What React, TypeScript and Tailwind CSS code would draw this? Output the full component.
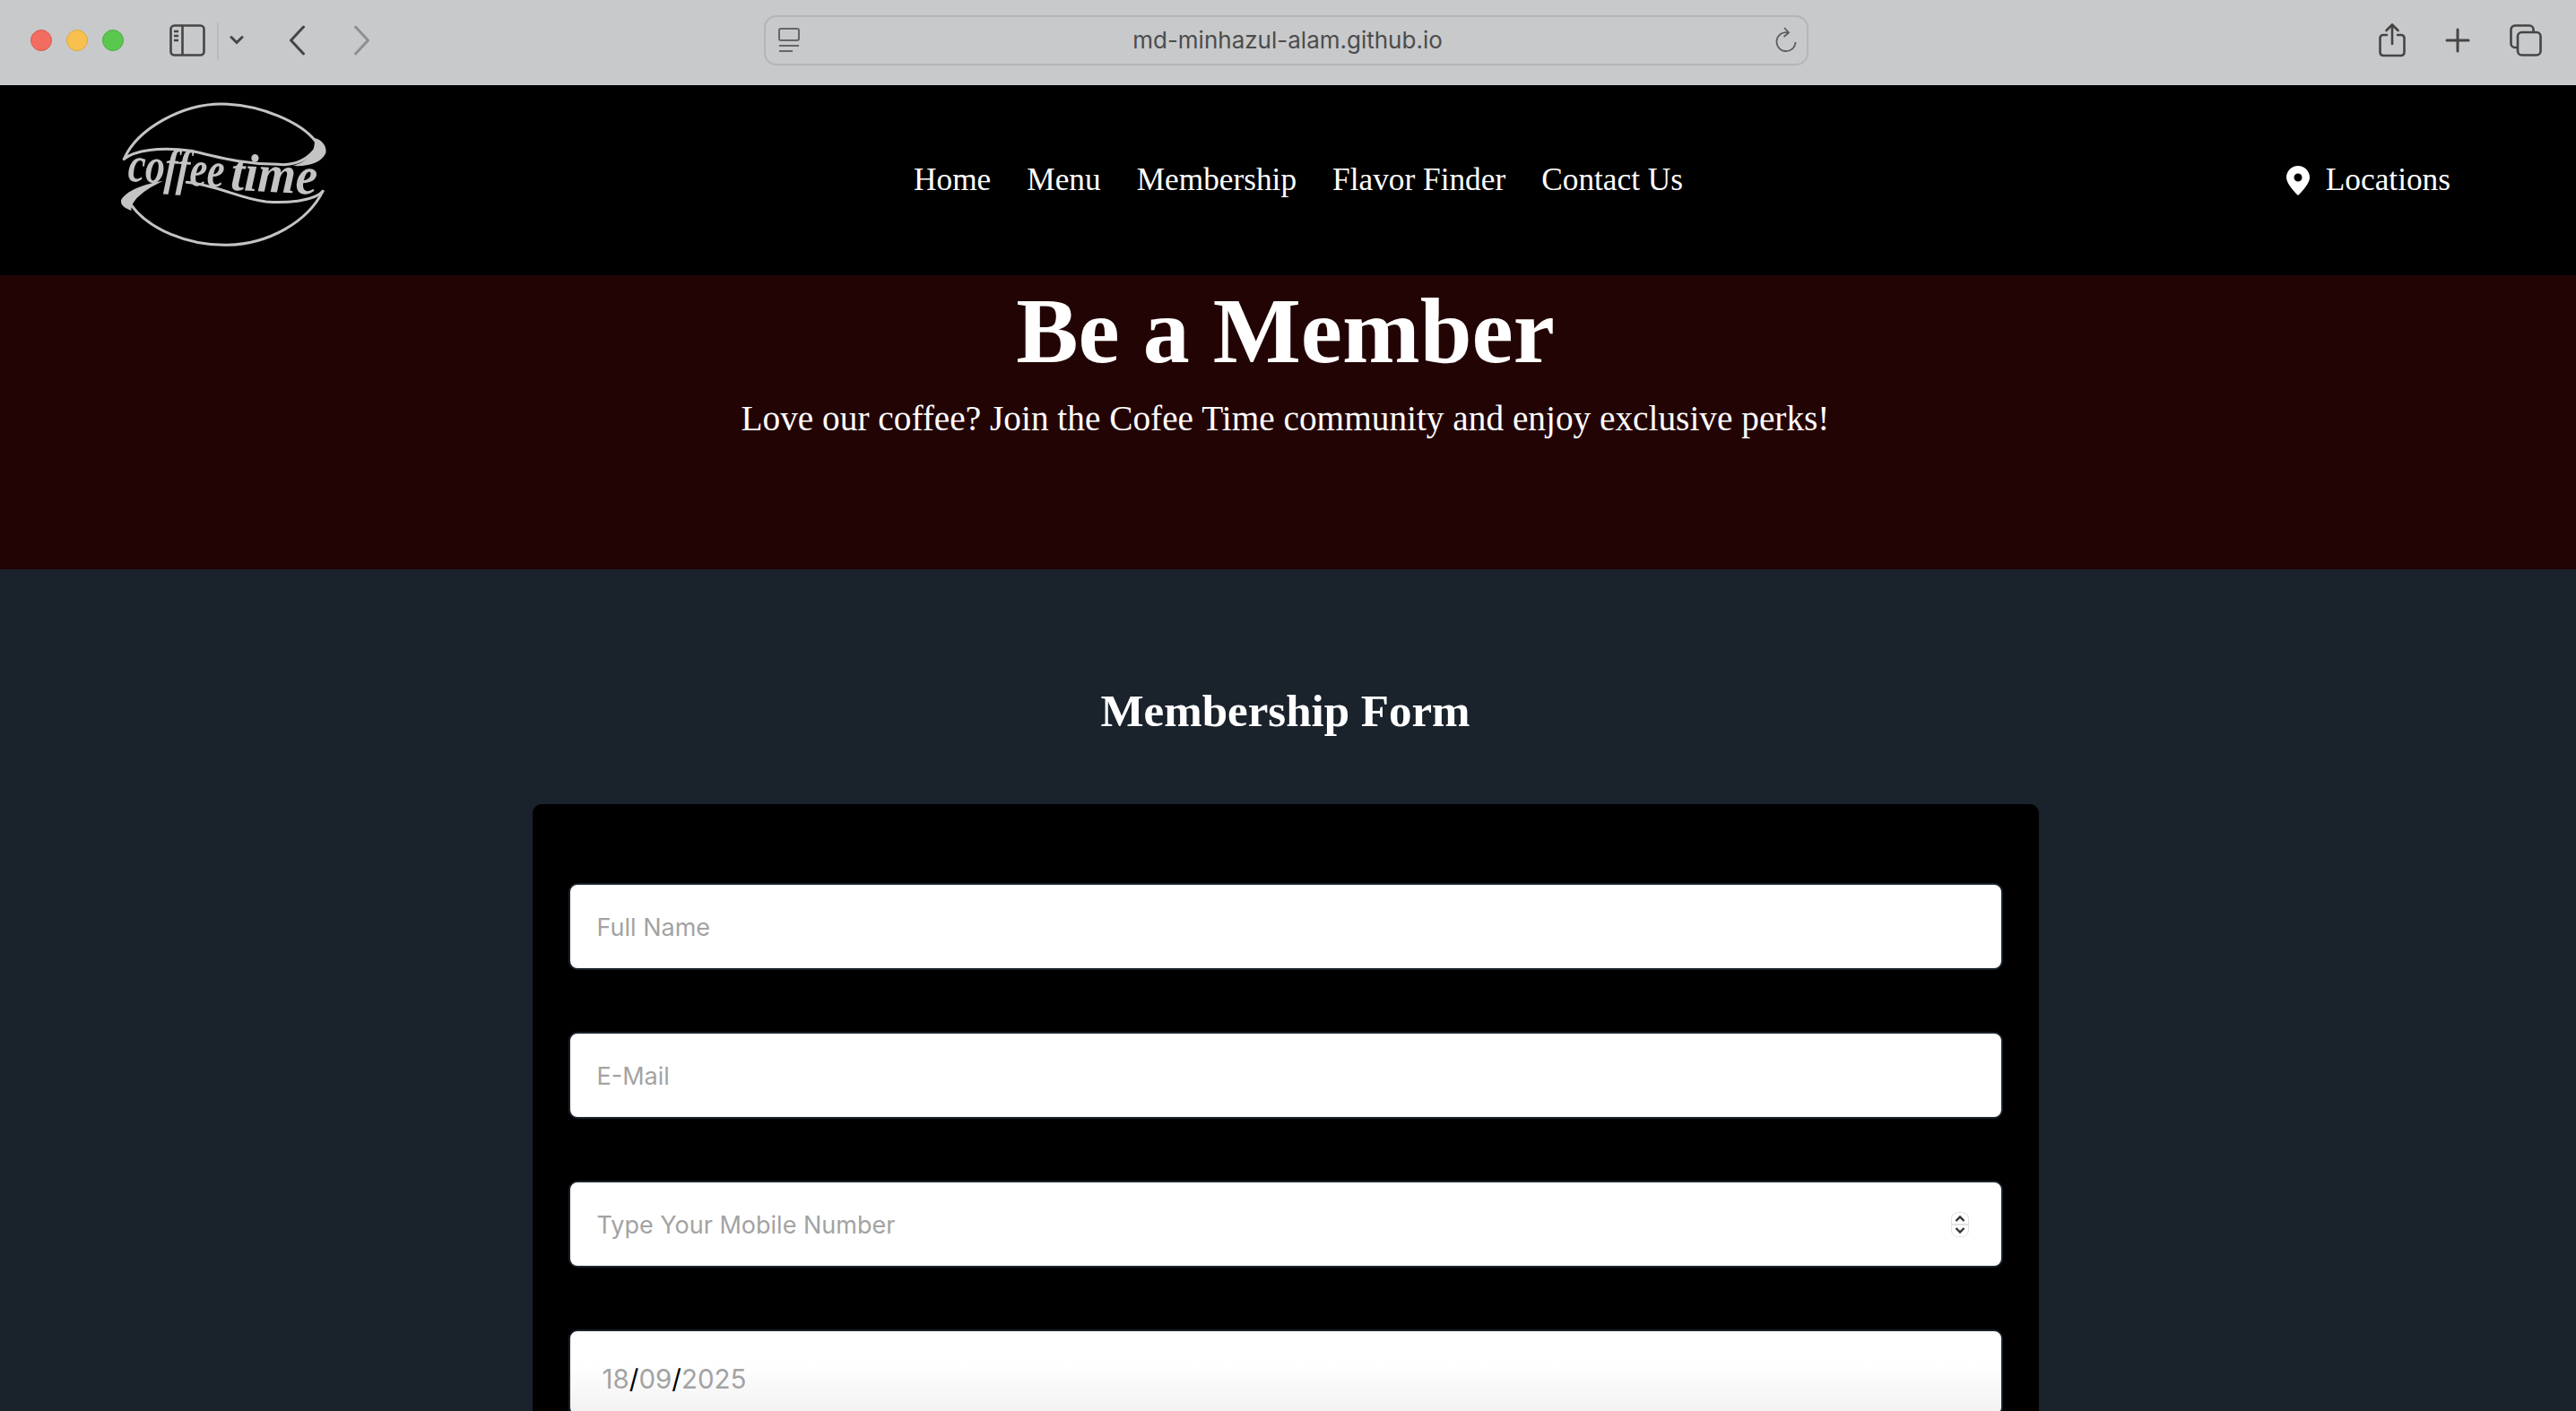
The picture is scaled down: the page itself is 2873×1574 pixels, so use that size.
function BrowserBar() {
  return (
    <div className="flex h-[95px] shrink-0 items-center bg-[#c8c9cb] pb-[5px] text-[#454545]">
      {/* Traffic lights */}
      <div className="ml-[34px] flex gap-[16px]">
        <span className="h-[24px] w-[24px] rounded-full border border-[#dc5a50] bg-[#f26d60]" />
        <span className="h-[24px] w-[24px] rounded-full border border-[#dfa93f] bg-[#f7c04f]" />
        <span className="h-[24px] w-[24px] rounded-full border border-[#4cae42] bg-[#5ac84f]" />
      </div>

      <svg width="40" height="36" viewBox="0 0 40 36" fill="none" stroke="currentColor" strokeWidth="2.6" className="ml-[51px]">
        <rect x="1.5" y="1.5" width="37" height="33" rx="4" />
        <path d="M14.5 2v32M5 8h5M5 13h5M5 18h5" />
      </svg>
      <span className="ml-[13px] h-[41px] w-[2px] bg-[#b9babc]" />
      <svg width="16" height="12" viewBox="0 0 16 12" fill="none" stroke="currentColor" strokeWidth="3" strokeLinecap="round" className="ml-[12px]">
        <path d="M2 2.5l6 6 6-6" />
      </svg>
      <svg width="19" height="34" viewBox="0 0 19 34" fill="none" stroke="currentColor" strokeWidth="3" strokeLinecap="round" strokeLinejoin="round" className="ml-[50px]">
        <path d="M16.5 2L2.5 17l14 15" />
      </svg>
      <svg width="19" height="34" viewBox="0 0 19 34" fill="none" stroke="#8f8f91" strokeWidth="3" strokeLinecap="round" strokeLinejoin="round" className="ml-[53px]">
        <path d="M2.5 2l14 15-14 15" />
      </svg>

      {/* Address bar */}
      <div className="ml-[439px] flex h-[56px] w-[1165px] items-center rounded-[14px] border-2 border-[#b4b5b7] px-[14px]">
        <svg width="24" height="28" viewBox="0 0 24 28" fill="none" stroke="#666" strokeWidth="2">
          <rect x="1" y="1" width="22" height="13" rx="2" />
          <path d="M1 20h22M1 26h15" />
        </svg>
        <span className="flex-1 pb-[2px] text-center font-['Inter',sans-serif] text-[26px] text-[#4c4c4c]">
          md-minhazul-alam.github.io
        </span>
        <svg width="24" height="30" viewBox="0 0 24 30" fill="none" stroke="#5c5c5c" strokeWidth="1.8" className="mr-[-3px]">
          <path d="M15 6.500A10.500 10.500 0 1 0 22.500 17" />
          <path d="M10 1l5 5.500-5.500 4.500" />
        </svg>
      </div>

      <svg width="30" height="38" viewBox="0 0 30 38" fill="none" stroke="currentColor" strokeWidth="2.6" strokeLinecap="round" strokeLinejoin="round" className="ml-[636px]">
        <path d="M9 13H5a3.5 3.5 0 0 0-3.5 3.5v16A3.5 3.5 0 0 0 5 36h20a3.5 3.5 0 0 0 3.5-3.5v-16A3.5 3.5 0 0 0 25 13h-4" />
        <path d="M15 23V2M8.5 8L15 1.5 21.5 8" />
      </svg>
      <svg width="28" height="28" viewBox="0 0 28 28" fill="none" stroke="currentColor" strokeWidth="3" strokeLinecap="round" className="ml-[44px]">
        <path d="M14 2v24M2 14h24" />
      </svg>
      <svg width="36" height="36" viewBox="0 0 36 36" fill="none" stroke="currentColor" strokeWidth="2.6" className="ml-[44px]">
        <path d="M8 26H6a4.500 4.500 0 0 1-4.500-4.500V6A4.500 4.500 0 0 1 6 1.500h16A4.500 4.500 0 0 1 26.500 6v2" />
        <rect x="9" y="9" width="25.500" height="25.500" rx="4.500" />
      </svg>
    </div>
  );
}

function Logo() {
  return (
    <svg width="270" height="190" viewBox="0 0 810 570" fill="none" className="mb-[12px] shrink-0">
      <g stroke="#c4c4c4" strokeWidth="9" strokeLinecap="round">
        <path d="M85 232C130 130 280 48 410 48C540 48 680 110 728 175" />
        <path d="M85 232C120 205 200 190 310 205C400 225 480 250 600 250C650 255 690 240 720 205" />
        <path d="M750 340C720 375 620 380 560 375C470 365 400 320 295 310" />
        <path d="M108 385C170 470 300 520 420 520C570 520 700 440 750 340" />
      </g>
      <path d="M722 163C745 165 765 190 760 212C745 245 700 258 650 255C690 245 728 215 722 163Z" fill="#c4c4c4" />
      <path d="M215 306C150 315 90 340 75 370C72 390 95 400 110 405C105 385 130 345 215 306Z" fill="#c4c4c4" />
      <g fill="#c4c4c4" fontFamily="'Liberation Serif', serif" fontStyle="italic" fontWeight="700">
        <text x="96" y="305" fontSize="168" textLength="322" lengthAdjust="spacingAndGlyphs" transform="rotate(4 96 305)">
          coffee
        </text>
        <text x="440" y="335" fontSize="178" textLength="290" lengthAdjust="spacingAndGlyphs" transform="rotate(3 440 335)">
          time
        </text>
      </g>
    </svg>
  );
}

function Navbar() {
  const links = ["Home", "Menu", "Membership", "Flavor Finder", "Contact Us"];
  return (
    <nav className="flex h-[212px] shrink-0 items-center bg-black pr-[140px] pl-[110px] text-white">
      <Logo />
      <ul className="ml-[639px] flex gap-[40px] pt-[1px] text-[35.3px]">
        {links.map((l) => (
          <li key={l}>{l}</li>
        ))}
      </ul>
      <div className="ml-auto flex items-center gap-[18px] pt-[1px] text-[35.3px]">
        <svg width="26" height="33" viewBox="0 0 26 33">
          <path
            fillRule="evenodd"
            fill="#fff"
            d="M13 0C5.800 0 0 5.800 0 13c0 6.500 8.500 15.800 13 20 4.500-4.200 13-13.500 13-20C26 5.800 20.200 0 13 0zm0 8.500a4.500 4.500 0 1 1 0 9 4.500 4.500 0 0 1 0-9z"
          />
        </svg>
        <span>Locations</span>
      </div>
    </nav>
  );
}

function Field({ label, placeholder, stepper }: { label: string; placeholder: string; stepper?: boolean }) {
  return (
    <div>
      <label className="flex h-[48px] items-center text-[28px] text-black">{label}</label>
      <div className="flex h-[97px] items-center rounded-[10px] border-2 border-[#1a222c] bg-white pr-[36px] pl-[30px] font-['Inter',sans-serif] text-[27px] text-[#a3a3a3]">
        <span className="flex-1 pt-[4px]">{placeholder}</span>
        {stepper && (
          <svg width="20" height="28" viewBox="0 0 20 28" fill="none">
            <rect x="0.500" y="0.500" width="19" height="27" rx="7" fill="#fff" stroke="#e2e2e2" />
            <path d="M0 14h20" stroke="#e2e2e2" strokeWidth="2" />
            <path d="M5.500 10l4.500-4.500L14.500 10M5.500 18l4.500 4.500 4.500-4.500" stroke="#333" strokeWidth="2.400" />
          </svg>
        )}
      </div>
    </div>
  );
}

export default function App() {
  return (
    <div className="flex h-screen flex-col overflow-hidden font-['Liberation_Serif',serif]">
      <BrowserBar />
      <Navbar />

      {/* Hero */}
      <section className="h-[328px] shrink-0 bg-[#230405] pr-[6px] text-center text-white">
        <h1 className="pt-[3px] text-[104px] leading-[118px] font-bold">Be a Member</h1>
        <p className="mt-[14px] text-[39.3px] leading-[50px]">
          Love our coffee? Join the Cofee Time community and enjoy exclusive perks!
        </p>
      </section>

      {/* Form */}
      <section className="flex-1 bg-[#1a222c] pr-[6px]">
        <h2 className="pt-[130px] text-center text-[51px] leading-[56px] font-bold text-white">Membership Form</h2>
        <form className="mx-auto mt-[76px] flex w-[1680px] flex-col gap-[21px] rounded-[10px] bg-black px-[40px] pt-[40px] pb-[40px]">
          <Field label="Full Name" placeholder="Full Name" />
          <Field label="E-Mail" placeholder="E-Mail" />
          <Field label="Mobile Number" placeholder="Type Your Mobile Number" stepper />
          <div>
            <label className="flex h-[48px] items-center text-[28px] text-black">Birthdate</label>
            <div className="flex h-[97px] items-start rounded-[10px] border-2 border-[#1a222c] bg-gradient-to-b from-white from-40% to-[#f1f1f1] pt-[36px] pl-[36px] font-['Inter',sans-serif] text-[29.5px] leading-[34px] text-[#a3a3a3]">
              18<span className="text-black">/</span>09<span className="text-black">/</span>2025
            </div>
          </div>
        </form>
      </section>
    </div>
  );
}
